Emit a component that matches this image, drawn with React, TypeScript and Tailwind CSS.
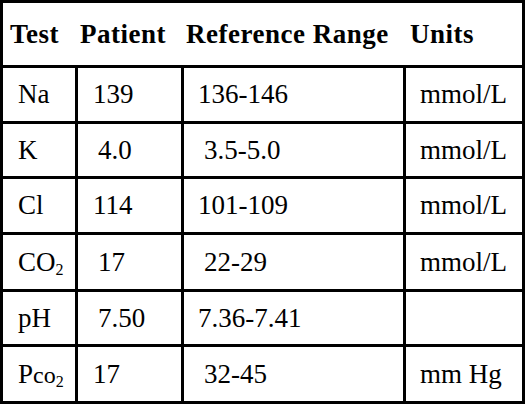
const rows = [
    { h: 'h-[56px]', test: <>Na</>, pt: '139', ptPad: 'pl-[15px]', ref: '136-146', refPad: 'pl-[14px]', units: 'mmol/L' },
    { h: 'h-[55px]', test: <>K</>, pt: '4.0', ptPad: 'pl-[20px]', ref: '3.5-5.0', refPad: 'pl-[20px]', units: 'mmol/L' },
    { h: 'h-[56px]', test: <>Cl</>, pt: '114', ptPad: 'pl-[15px]', ref: '101-109', refPad: 'pl-[14px]', units: 'mmol/L' },
    {
        h: 'h-[57px]',
        test: <>CO<sub className="text-[16px] relative top-[4px]">2</sub></>,
        pt: '17', ptPad: 'pl-[20px]', ref: '22-29', refPad: 'pl-[20px]', units: 'mmol/L',
    },
    { h: 'h-[55px]', test: <>pH</>, pt: '7.50', ptPad: 'pl-[20px]', ref: '7.36-7.41', refPad: 'pl-[14px]', units: '' },
    {
        h: 'h-[54px]',
        test: <>P<span className="text-[24px]">co</span><sub className="text-[16px] relative top-[4px]">2</sub></>,
        pt: '17', ptPad: 'pl-[15px]', ref: '32-45', refPad: 'pl-[20px]', units: 'mm Hg',
    },
]

export default function App() {
    return (
        <div className="w-[525px] h-[404px] bg-white border-[3px] border-black text-black text-[27px] leading-none font-['Liberation_Serif',serif]">
            <div className="flex h-[65px] items-center border-b-[3px] border-black font-bold tracking-[0.5px]">
                <div className="w-[72px] pl-[7px]">Test</div>
                <div className="w-[106px] pl-[5px]">Patient</div>
                <div className="w-[222px] pl-[5px]">Reference Range</div>
                <div className="flex-1 pl-[7px]">Units</div>
            </div>
            {rows.map((r, i) => (
                <div key={i} className={`flex ${r.h} ${i < rows.length - 1 ? 'border-b-[3px] border-black' : ''}`}>
                    <div className="w-[72px] pl-[15px] flex items-center">
                        <span>{r.test}</span>
                    </div>
                    <div className={`w-[106px] border-l-[3px] border-black flex items-center ${r.ptPad}`}>{r.pt}</div>
                    <div className={`w-[222px] border-l-[3px] border-black flex items-center ${r.refPad}`}>{r.ref}</div>
                    <div className="flex-1 border-l-[3px] border-black flex items-center pl-[14px]">{r.units}</div>
                </div>
            ))}
        </div>
    )
}
